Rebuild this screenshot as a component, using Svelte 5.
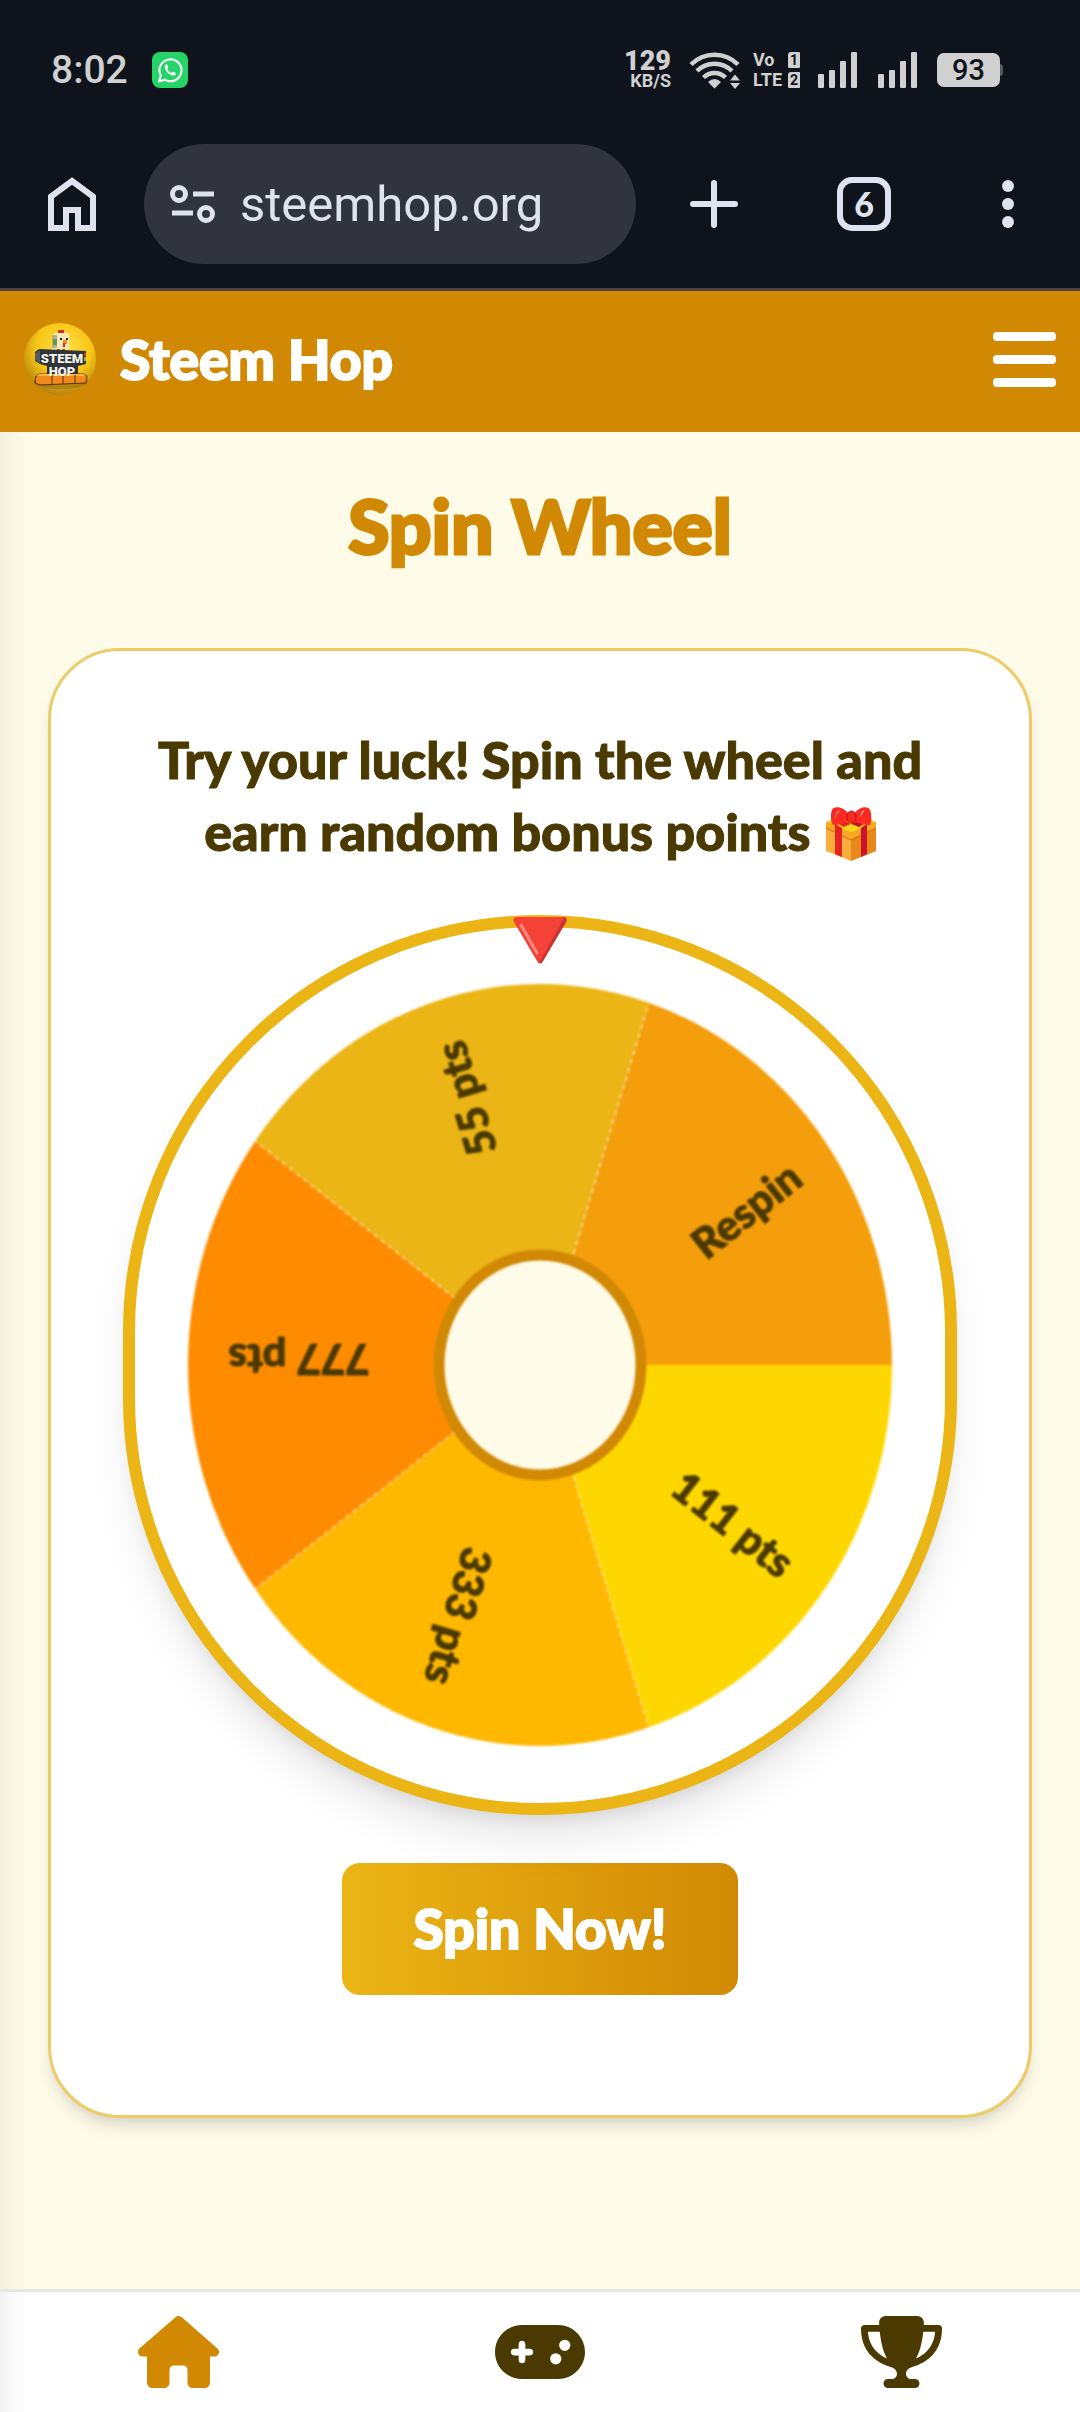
<script lang="ts">
  type Slice = { label: string; color: string };

  const slices: Slice[] = [
    { label: "111 pts", color: "#ffd700" },
    { label: "333 pts", color: "#ffb800" },
    { label: "777 pts", color: "#ff8c00" },
    { label: "55 pts", color: "#ebb515" },
    { label: "Respin", color: "#f59e0b" },
  ];

  // wheel is drawn slightly taller than wide
  const cx = 405;
  const cy = 438;
  const rx = 352;
  const ry = 381;
  const step = (Math.PI * 2) / slices.length;

  function point(angle: number, k = 1) {
    return [cx + Math.cos(angle) * rx * k, cy + Math.sin(angle) * ry * k];
  }

  function slicePath(i: number) {
    const [x1, y1] = point(i * step);
    const [x2, y2] = point((i + 1) * step);
    return `M${cx} ${cy}L${x1} ${y1}A${rx} ${ry} 0 0 1 ${x2} ${y2}Z`;
  }

  function labelTransform(i: number) {
    const [x, y] = point((i + 0.5) * step, 0.885);
    const deg = (Math.atan2(y - cy, x - cx) * 180) / Math.PI;
    return `translate(${x} ${y}) rotate(${deg})`;
  }

  const edges = [1, 2, 3, 4].map((i) => point(i * step));

  let address = $state("steemhop.org");
</script>

<div class="screen">
  <div class="status">
    <span class="time">8:02</span>
    <svg class="whatsapp" viewBox="0 0 36 36" width="36" height="36">
      <rect width="36" height="36" rx="8" fill="#25d366" />
      <path d="M7 29.500 8.800 23.500A11 11 0 1 1 13 27.800Z" fill="none" stroke="#fff" stroke-width="2" stroke-linejoin="round" />
      <path d="M14.300 12.200c-1 .4-1.700 1.600-1.500 3 .6 4 4.400 7.700 8.200 8.300 1.600.2 2.900-.6 3.200-2.300l-3.200-1.700-1.500 1.500c-2-.8-3.500-2.300-4.300-4.200l1.200-1.500-1.300-3.100z" fill="#fff" />
    </svg>

    <div class="indicators">
      <div class="speed"><b>129</b><span>KB/S</span></div>
      <svg class="wifi" viewBox="0 0 52 38" width="52" height="38">
        <g fill="none" stroke="#d0d0d0" stroke-width="4.500">
          <path d="M2 13.500a33 33 0 0 1 47 0" />
          <path d="M8 20a24.500 24.500 0 0 1 35 0" />
          <path d="M14.500 26.500a15.500 15.500 0 0 1 22 0" />
        </g>
        <path d="M19 31q6.500-6 13 0l-6.500 6.500zM41 29.500l5-6 5 6zM41 32l5 6 5-6z" fill="#d0d0d0" />
      </svg>
      <div class="volte">
        <span>Vo</span><i>1</i>
        <span>LTE</span><i>2</i>
      </div>
      {#each [1, 2] as sim (sim)}
        <svg class="signal" viewBox="0 0 39 36" width="39" height="36" fill="#d0d0d0">
          <rect y="22" width="6" height="14" rx="1" />
          <rect x="11" y="18" width="6" height="18" rx="1" />
          <rect x="22" y="9" width="6" height="27" rx="1" />
          <rect x="33" width="6" height="36" rx="1" />
        </svg>
      {/each}
      <div class="battery">93</div>
    </div>
  </div>

  <div class="toolbar">
    <button class="tool" aria-label="Home">
      <svg viewBox="0 0 48 54" width="48" height="54">
        <path d="M24 4 45 19.500V51H30V33H18V51H3V19.500Z" fill="none" stroke="#dfe2ef" stroke-width="6" />
      </svg>
    </button>
    <label class="omnibox">
      <svg viewBox="0 0 46 38" width="46" height="38" fill="none" stroke="#dfe2ef" stroke-width="5">
        <circle cx="9" cy="9" r="6.500" />
        <path d="M23 9h21M2 28h21" />
        <circle cx="36" cy="29" r="6.500" />
      </svg>
      <input type="text" aria-label="Address" bind:value={address} />
    </label>
    <div class="actions">
      <button class="tool" aria-label="New tab">
        <svg viewBox="0 0 48 48" width="48" height="48">
          <path d="M24 3v42M3 24h42" stroke="#dfe2ef" stroke-width="6" stroke-linecap="round" />
        </svg>
      </button>
      <button class="tool tabs" aria-label="Tabs">6</button>
      <button class="tool more" aria-label="More">
        <svg viewBox="0 0 12 48" width="12" height="48" fill="#dfe2ef">
          <circle cx="6" cy="6" r="6" />
          <circle cx="6" cy="24" r="6" />
          <circle cx="6" cy="42" r="6" />
        </svg>
      </button>
    </div>
  </div>

  <header>
    <a class="brand" href="#home">
      <svg viewBox="0 0 72 72" width="72" height="72">
        <defs>
          <radialGradient id="coin" cx="0.55" cy="0.35" r="0.7">
            <stop offset="0" stop-color="#ffe14a" />
            <stop offset="0.550" stop-color="#f7c615" />
            <stop offset="1" stop-color="#a8790f" />
          </radialGradient>
        </defs>
        <circle cx="36" cy="36" r="36" fill="url(#coin)" />
        <ellipse cx="37" cy="58" rx="27" ry="8" fill="#8a5a0a" opacity="0.400" />
        <path d="M34 7h6v5h-6z" fill="#d32f1c" />
        <path d="M28 12l4-2h13v15l-4 2H28z" fill="#f6e7b8" />
        <path d="M28 12h5v13h-5z" fill="#b9ae7c" />
        <path d="M29 16h4v6h-4z" fill="#5e9a58" />
        <path d="M36 15h2v2h-2zM42 15h2v2h-2z" fill="#222" />
        <path d="M39 17h4v4h-4z" fill="#f58a12" />
        <path d="M39 20h2v4h-2z" fill="#d32f1c" />
        <path d="M33 26h3v3h-3zM38 26h3v3h-3z" fill="#c4471a" />
        <path d="M11 29l4-3 47 2v13l-8 2v11H23V43l-7-2-5-3z" fill="#303337" />
        <path d="M11 30l5-3v13l-5-3z" fill="#55595d" />
        <path d="M60 30h2v3h-2z" fill="#d33" />
        <path d="M60 34h2v4h-2z" fill="#8bc34a" />
        <path d="M12 53l4-2h43l4 2-1 7-46 2-5-2z" fill="#f08a1c" stroke="#5d2d0a" stroke-width="1" />
        <path d="M12 53l4-2h43l3 2z" fill="#ffb545" />
        <path d="M28 52v9M39 52v9M51 52v8" stroke="#5d2d0a" stroke-width="1" />
        <text x="38" y="40" class="logo-text" font-size="13">STEEM</text>
        <text x="38" y="53" class="logo-text" font-size="13">HOP</text>
      </svg>
      <span>Steem Hop</span>
    </a>
    <button class="menu" aria-label="Menu"><span></span><span></span><span></span></button>
  </header>

  <main>
    <h1>Spin Wheel</h1>
    <section class="card">
      <p>
        Try your luck! Spin the wheel and<br />
        earn random bonus points
        <svg class="gift" viewBox="0 0 50 54" width="50" height="54">
          <path d="M0 15 25 10 50 15V44L25 54 0 44Z" fill="#f9ae3c" />
          <path d="M25 26 50 15V44L25 54Z" fill="#e8871a" />
          <path d="M0 15 25 5 50 15 25 26Z" fill="#fdc21a" />
          <path d="M0 15 25 26 50 15V21L25 33 0 21Z" fill="#f9a825" />
          <path d="M0 21 25 33 50 21" fill="none" stroke="#c96f10" stroke-width="1" />
          <path d="M9 17 16 21V50L9 47ZM8 14 15 12 25 17 18 20Z" fill="#e62222" />
          <path d="M41 17 35 21V50L41 47Z" fill="#d0102c" />
          <path d="M42 14 35 12 25 17 33 20Z" fill="#c8102e" />
          <path d="M16 21 25 17 34 21 25 25Z" fill="#ffd51c" />
          <path d="M24 8C18 0 8-2 6 3S5 18 8 18 19 17 24 13ZM27 8C32 0 42-2 44 3S46 18 43 18 32 17 27 13Z" fill="#fb2a22" />
          <path d="M9 12q1-8 5-9-4 4-5 9M34 10q1-6 5-7-3 4-5 7" fill="#fff" opacity="0.700" />
          <ellipse cx="25.500" cy="10" rx="4.500" ry="6" fill="#f92a22" stroke="#b80f1a" stroke-width="1" />
        </svg>
      </p>

      <div class="wheel">
        <svg class="pointer" viewBox="0 0 54 47" width="54" height="47">
          <path d="M3 0H51Q55 1 53 5L30 44Q27 49 24 44L1 5Q-1 1 3 0Z" fill="#f44336" />
          <path d="M51 0Q55 1 53 5L30 44Q28 47 26 46L50 3Z" fill="#c93434" />
          <path d="M8 8 24 36" stroke="#ff8a80" stroke-width="3" stroke-linecap="round" />
        </svg>
        <svg class="disc" viewBox="0 0 810 876">
          {#each slices as slice, i (slice.label)}
            <path d={slicePath(i)} fill={slice.color} />
          {/each}
          {#each edges as [x, y]}
            <line x1={cx} y1={cy} x2={x} y2={y} class="edge" />
          {/each}
          {#each slices as slice, i (slice.label)}
            <text class="label" transform={labelTransform(i)} y="21">{slice.label}</text>
          {/each}
          <ellipse {cx} {cy} rx="101" ry="110" fill="#fffbe9" stroke="#d18904" stroke-width="11" />
        </svg>
      </div>

      <button class="spin">Spin Now!</button>
    </section>
  </main>

  <nav>
    <a href="#home" class="active" aria-label="Home">
      <svg viewBox="0 0 576 512" width="81" height="72">
        <path d="M575.8 255.5c0 18-15 32.100-32 32.100h-32l.7 160.200c0 2.700-.2 5.400-.5 8.100V472c0 22.100-17.900 40-40 40H392c-22.100 0-40-17.900-40-40V384c0-17.700-14.300-32-32-32H256c-17.700 0-32 14.300-32 32v88c0 22.100-17.900 40-40 40H104c-22.100 0-40-17.900-40-40V287.600H32c-18 0-32-14-32-32.100c0-9 3-17 10-24L266.400 8c7-7 15-8 22-8s15 2 21 7L564.800 231.500c8 7 12 15 11 24z" />
      </svg>
    </a>
    <a href="#games" aria-label="Games">
      <svg viewBox="0 0 640 512" width="90" height="72">
        <path d="M192 64C86 64 0 150 0 256S86 448 192 448H448c106 0 192-86 192-192s-86-192-192-192H192zM496 168a40 40 0 1 1 0 80 40 40 0 1 1 0-80zM392 304a40 40 0 1 1 80 0 40 40 0 1 1 -80 0zM168 200c0-13.300 10.700-24 24-24s24 10.700 24 24v32h32c13.300 0 24 10.700 24 24s-10.700 24-24 24H216v32c0 13.300-10.700 24-24 24s-24-10.700-24-24V280H136c-13.300 0-24-10.700-24-24s10.700-24 24-24h32V200z" />
      </svg>
    </a>
    <a href="#leaders" aria-label="Leaderboard">
      <svg viewBox="0 0 576 512" width="81" height="72">
        <path d="M400 0H176c-26.500 0-48.100 21.800-47.100 48.200c.2 5.300 .4 10.600 .7 15.800H24C10.700 64 0 74.700 0 88c0 92.600 33.500 157 78.500 200.700c44.300 43.100 98.300 64.800 138.100 75.800c23.400 6.500 39.400 26 39.400 45.600c0 20.900-17 37.900-37.900 37.900H192c-17.700 0-32 14.300-32 32s14.300 32 32 32H384c17.700 0 32-14.300 32-32s-14.300-32-32-32H357.900C337 448 320 431 320 410.100c0-19.600 15.900-39.200 39.400-45.600c39.900-11 93.900-32.700 138.200-75.800C542.500 245 576 180.600 576 88c0-13.300-10.700-24-24-24H446.400c.3-5.200 .5-10.400 .7-15.800C448.100 21.800 426.500 0 400 0zM48.900 112h84.400c9.100 90.100 29.200 150.300 51.900 190.600c-24.900-11-50.800-26.500-73.200-48.300c-32-31.100-58-76-63-142.300zM464.100 254.300c-22.400 21.800-48.300 37.300-73.200 48.300c22.700-40.300 42.800-100.500 51.900-190.600h84.400c-5.100 66.300-31.100 111.200-63 142.300z" />
      </svg>
    </a>
  </nav>
</div>

<style>
  :global(body) {
    margin: 0;
    background: #fffbe9;
  }

  .screen {
    display: flex;
    flex-direction: column;
    min-height: 100vh;
    font-family: Lato, "Liberation Sans", sans-serif;
  }

  svg {
    display: block;
    flex-shrink: 0;
  }

  button {
    padding: 0;
    border: none;
    background: none;
    font-family: inherit;
    cursor: pointer;
  }

  .status {
    display: flex;
    align-items: center;
    height: 144px;
    padding: 0 80px 4px 51px;
    box-sizing: border-box;
    background: #0f131b;
    color: #d0d0d0;
    font-family: Roboto, sans-serif;
  }

  .time {
    font-size: 39px;
    font-weight: 500;
  }

  .whatsapp {
    margin-left: 24px;
  }

  .indicators {
    display: flex;
    align-items: center;
    margin-left: auto;
  }

  .speed {
    display: grid;
    justify-items: end;
    font-weight: 700;
  }

  .speed b {
    font-size: 27px;
    line-height: 22px;
  }

  .speed span {
    font-size: 18px;
    line-height: 18px;
  }

  .wifi {
    margin-left: 18px;
  }

  .volte {
    display: grid;
    grid-template-columns: 33px 12px;
    gap: 4px 2px;
    margin-left: 12px;
    font-size: 18px;
    font-weight: 700;
    line-height: 16px;
  }

  .volte i {
    border-radius: 3px 1px 1px 1px;
    background: #d0d0d0;
    color: #0f131b;
    font-size: 14px;
    font-style: normal;
    text-align: center;
  }

  .signal {
    margin-left: 18px;
  }

  .signal + .signal {
    margin-left: 21px;
  }

  .battery {
    position: relative;
    width: 63px;
    margin-left: 20px;
    border-radius: 7px;
    background: #d0d0d0;
    color: #0f131b;
    font-size: 29px;
    font-weight: 500;
    line-height: 34px;
    text-align: center;
  }

  .battery::after {
    content: "";
    position: absolute;
    top: 11px;
    left: 100%;
    width: 3px;
    height: 12px;
    border-radius: 0 3px 3px 0;
    background: #54585e;
  }

  .toolbar {
    display: flex;
    align-items: center;
    gap: 48px;
    height: 144px;
    padding: 0 66px 24px 48px;
    box-sizing: border-box;
    background: #0f131b;
  }

  .omnibox {
    display: flex;
    flex: 1;
    align-items: center;
    gap: 24px;
    min-width: 0;
    height: 120px;
    padding: 0 24px 0 26px;
    box-sizing: border-box;
    border-radius: 60px;
    background: #31343f;
  }

  .omnibox input {
    flex: 1;
    min-width: 0;
    padding: 0;
    border: none;
    outline: none;
    background: none;
    color: #dfe2ef;
    font-family: Roboto, sans-serif;
    font-size: 49px;
  }

  .actions {
    display: flex;
    align-items: center;
    gap: 99px;
    padding-left: 6px;
  }

  .tabs {
    width: 54px;
    height: 54px;
    border: 6px solid #dfe2ef;
    border-radius: 15px;
    color: #dfe2ef;
    font-size: 34px;
    font-weight: 900;
    line-height: 42px;
  }

  .more {
    padding-left: 12px;
  }

  header {
    display: flex;
    align-items: center;
    justify-content: space-between;
    height: 144px;
    padding: 0 24px 5px;
    box-sizing: border-box;
    border-top: 3px solid #4c453f;
    background: #d18904;
  }

  .brand {
    display: flex;
    align-items: center;
    gap: 24px;
    color: #fff;
    font-size: 55px;
    font-weight: 900;
    -webkit-text-stroke: 2px currentColor;
    text-decoration: none;
  }

  .logo-text {
    fill: #f4f4ee;
    font-family: Roboto, sans-serif;
    font-weight: 900;
    -webkit-text-stroke: 0;
    text-anchor: middle;
  }

  .menu {
    display: grid;
    gap: 14px;
    width: 63px;
  }

  .menu span {
    height: 9px;
    border-radius: 4px;
    background: #fff;
  }

  main {
    flex: 1;
    padding: 48px;
    background: linear-gradient(90deg, rgba(0, 0, 0, 0.05), rgba(0, 0, 0, 0.02) 12px, transparent 30px) #fffbe9;
  }

  h1 {
    margin: 0 0 78px;
    color: #d18904;
    font-size: 75px;
    font-weight: 900;
    -webkit-text-stroke: 3px currentColor;
    line-height: 90px;
    text-align: center;
  }

  .card {
    display: flex;
    flex-direction: column;
    align-items: center;
    gap: 48px;
    padding: 72px 72px 120px;
    border: 3px solid #ebcc68;
    border-radius: 72px;
    background: #fff;
    box-shadow:
      0 12px 18px -3px rgba(0, 0, 0, 0.1),
      0 6px 12px -6px rgba(0, 0, 0, 0.1);
  }

  p {
    margin: 0;
    color: #4a3900;
    font-size: 52px;
    font-weight: 900;
    -webkit-text-stroke: 1px currentColor;
    line-height: 72px;
    text-align: center;
  }

  .gift {
    display: inline-block;
    margin-left: 3px;
    vertical-align: -10px;
  }

  .wheel {
    position: relative;
    width: 100%;
    box-sizing: border-box;
    border: 12px solid #ebb515;
    border-radius: 9999px;
    background: #fff;
    box-shadow:
      0 30px 45px -9px rgba(0, 0, 0, 0.1),
      0 12px 18px -9px rgba(0, 0, 0, 0.1);
  }

  .pointer {
    position: absolute;
    top: -10px;
    left: calc(50% - 27px);
    z-index: 1;
  }

  .disc {
    width: 100%;
    height: auto;
    filter: blur(1px);
  }

  .edge {
    stroke: #fff;
    stroke-dasharray: 4 5;
    stroke-opacity: 0.5;
    stroke-width: 2;
  }

  .label {
    fill: #4a3900;
    stroke: #4a3900;
    stroke-linejoin: round;
    stroke-width: 1;
    font-size: 42px;
    font-weight: 900;
    text-anchor: end;
  }

  .spin {
    height: 132px;
    padding: 0 72px 3px;
    border-radius: 18px;
    background: linear-gradient(90deg, #ebb515, #d18904);
    color: #fff;
    font-size: 55px;
    font-weight: 900;
    -webkit-text-stroke: 2px currentColor;
  }

  nav {
    display: flex;
    align-items: center;
    justify-content: space-around;
    height: 123px;
    box-sizing: border-box;
    border-top: 3px solid #e6e6e6;
    background: linear-gradient(90deg, rgba(0, 0, 0, 0.05), rgba(0, 0, 0, 0.02) 12px, transparent 30px) #fff;
  }

  nav a {
    color: #4a3900;
  }

  nav a.active {
    color: #d18904;
  }

  nav svg {
    fill: currentColor;
  }
</style>
